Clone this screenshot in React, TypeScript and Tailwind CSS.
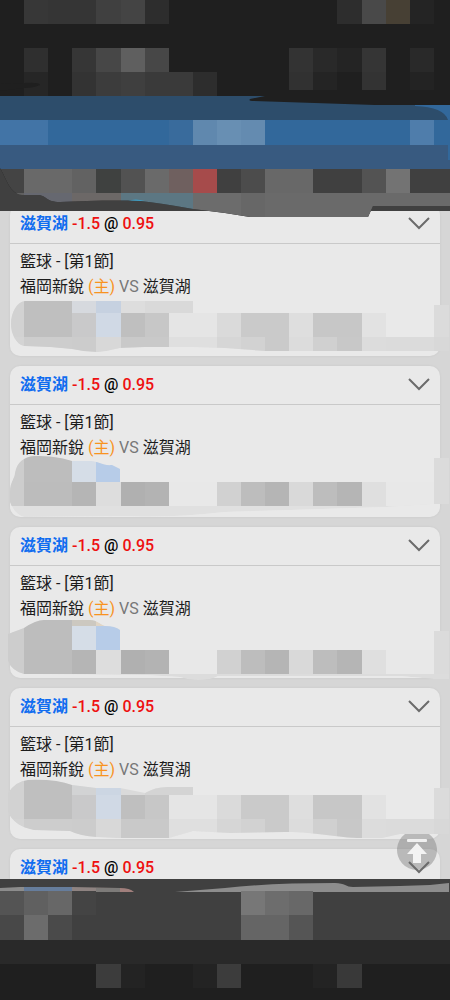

import { useId } from 'react'

// [first column, number of columns, colour]
type Cell = [number, number, string]

interface Row {
  y: number
  h: number
  cells: Cell[]
}

interface MosaicProps {
  top: number
  height: number
  rows: Row[]
  clip: string
  base: string
}

interface Bet {
  id: number
  pick: string
  handicap: string
  odds: string
  league: string
  home: string
  away: string
  mosaic?: MosaicProps
}

const COLUMN = 24.1

const faded: Cell[] = [
  [0, 1, '#d2d2d2'],
  [1, 2, '#bfbfbf'],
  [3, 1, '#c9c9ca'],
  [4, 1, '#d0d9e5'],
  [5, 1, '#bfbfbf'],
  [6, 1, '#c7c7c7'],
  [7, 2, '#e5e5e5'],
  [9, 1, '#dadada'],
  [10, 2, '#cacaca'],
  [12, 1, '#dedede'],
  [13, 2, '#c7c7c7'],
  [15, 1, '#e2e2e2'],
  [16, 2, '#e9e9e9'],
  [18, 1, '#dbdbdb'],
]

const fadedEnd: Cell[] = [
  [0, 1, '#d4d4d4'],
  [1, 2, '#cdcdcd'],
  [3, 1, '#cccccc'],
  [4, 1, '#d8d8d8'],
  [5, 2, '#c9c9c9'],
  [7, 2, '#dfdfdf'],
  [9, 1, '#d6d6d6'],
  [10, 1, '#d2d2d2'],
  [11, 1, '#cacaca'],
  [12, 1, '#dcdcdc'],
  [13, 1, '#d0d0d0'],
  [14, 1, '#c8c8c8'],
  [15, 1, '#dcdcdc'],
  [16, 2, '#dbdbdb'],
  [18, 1, '#d8d8d8'],
]

const strong: Cell[] = [
  [0, 1, '#cdcdcd'],
  [1, 2, '#bcbcbc'],
  [3, 1, '#b5b5b5'],
  [4, 1, '#dddddd'],
  [5, 1, '#b0b0b0'],
  [6, 1, '#b3b3b3'],
  [9, 1, '#d1d1d1'],
  [10, 1, '#bdbdbd'],
  [11, 1, '#b5b5b5'],
  [12, 1, '#d9d9d9'],
  [13, 1, '#bdbdbd'],
  [14, 1, '#b5b5b5'],
  [15, 1, '#dfdfdf'],
  [18, 1, '#dbdbdb'],
]

const strongTop: Cell[] = [
  [0, 1, '#cdcdcd'],
  [1, 2, '#bdbdbd'],
  [3, 1, '#d5dde7'],
  [4, 1, '#b7cce8'],
  [18, 1, '#dbdbdb'],
]

const cardMosaics: MosaicProps[] = [
  {
    top: 205,
    height: 151,
    base: '#dcdcdc',
    clip: 'M24 346C16 344 11 334 11 324C11 312 17 302 25 301H193V313H434V305H449V351H265L225 348L193 347L145 347L120 348Q108 351 97 352Q85 352 72 349L50 347Z',
    rows: [
      {
        y: 301,
        h: 12,
        cells: [
          [0, 1, '#d2d2d2'],
          [1, 2, '#bfbfbf'],
          [3, 1, '#d6d9de'],
          [4, 1, '#c6d1e0'],
          [5, 1, '#dddddd'],
          [6, 2, '#d9d9d9'],
          [18, 1, '#dbdbdb'],
        ],
      },
      { y: 313, h: 24, cells: faded },
      { y: 337, h: 16, cells: fadedEnd },
    ],
  },
  {
    top: 366,
    height: 151,
    base: '#e0e0e0',
    clip: 'M10 492C10 482 15 478 15 473C17 462 24 457 34 456C48 456 60 457 72 461H90C98 461 103 466 112 465L120 469V482H434V458H449V504H434L386 507L290 510L225 512Q170 518 130 516L24 517Q14 514 10 502Z',
    rows: [
      { y: 456, h: 26, cells: strongTop },
      { y: 482, h: 24, cells: strong },
    ],
  },
  {
    top: 527,
    height: 151,
    base: '#dcdcdc',
    clip: 'M8 634L24 628Q36 620 44 620H90C97 620 101 625 105 626Q115 626 120 630V650H434V631H449V679H434L400 676H218Q212 680 198 680Q188 680 180 677L145 675L24 674Q12 671 8 661Z',
    rows: [
      {
        y: 620,
        h: 6,
        cells: [
          [0, 1, '#cdcdcd'],
          [1, 2, '#bdbdbd'],
          [3, 1, '#ccc8c0'],
          [4, 1, '#e0d5c5'],
        ],
      },
      { y: 626, h: 24, cells: strongTop },
      { y: 650, h: 24, cells: strong },
    ],
  },
  {
    top: 688,
    height: 151,
    base: '#dcdcdc',
    clip: 'M8 793Q16 781 28 780Q56 779 72 785L96 788H120L145 793Q155 787 167 787H193V795H434V788H449V834H400L382 838H362C335 838 320 832 285 832L230 833L193 831L169 838H120L97 837Q80 836 70 831L34 830Q14 826 8 812Z',
    rows: [
      {
        y: 779,
        h: 16,
        cells: [
          [0, 1, '#d2d2d2'],
          [1, 2, '#bfbfbf'],
          [3, 1, '#d2d3d4'],
          [4, 1, '#ccd6e3'],
          [5, 1, '#dadada'],
          [6, 2, '#d4d4d4'],
          [18, 1, '#dbdbdb'],
        ],
      },
      { y: 795, h: 24, cells: faded },
      { y: 819, h: 20, cells: fadedEnd },
    ],
  },
]

const headerRows: Row[] = [
  {
    y: 0,
    h: 24,
    cells: [
      [1, 1, '#373737'],
      [2, 2, '#353535'],
      [4, 1, '#404040'],
      [5, 1, '#444444'],
      [6, 1, '#2d2d2d'],
      [14, 1, '#2d2d2d'],
      [15, 1, '#494949'],
      [16, 1, '#474034'],
      [17, 1, '#242424'],
    ],
  },
  {
    y: 48,
    h: 24,
    cells: [
      [1, 1, '#2f2f2f'],
      [3, 1, '#363636'],
      [4, 1, '#474747'],
      [5, 1, '#5f5f5f'],
      [6, 1, '#474747'],
      [12, 1, '#333333'],
      [13, 1, '#292929'],
      [14, 1, '#242424'],
      [15, 1, '#353535'],
      [17, 1, '#292929'],
    ],
  },
  {
    y: 72,
    h: 24,
    cells: [
      [1, 1, '#262626'],
      [3, 1, '#333333'],
      [4, 1, '#3c3c3c'],
      [5, 1, '#3f3f3f'],
      [6, 2, '#3a3a3a'],
      [8, 1, '#2d2d2d'],
    ],
  },
  {
    y: 72,
    h: 18,
    cells: [
      [12, 1, '#313131'],
      [13, 1, '#242424'],
      [15, 1, '#333333'],
      [17, 1, '#232323'],
    ],
  },
  { y: 96, h: 24, cells: [[0, 19, '#2d4d6b']] },
  {
    y: 120,
    h: 25,
    cells: [
      [0, 2, '#4274a6'],
      [2, 5, '#32689b'],
      [7, 1, '#396b9c'],
      [8, 1, '#6088ae'],
      [9, 1, '#688fb3'],
      [10, 1, '#648bb0'],
      [11, 6, '#32689b'],
      [17, 1, '#4f7dab'],
      [18, 1, '#32689b'],
    ],
  },
  { y: 145, h: 24, cells: [[0, 19, '#385a80']] },
  {
    y: 169,
    h: 24,
    cells: [
      [0, 1, '#444444'],
      [1, 2, '#696969'],
      [3, 1, '#626262'],
      [4, 1, '#3f4140'],
      [5, 1, '#525252'],
      [6, 1, '#6a6a6a'],
      [7, 1, '#6f605f'],
      [8, 1, '#a64b4b'],
      [9, 1, '#404040'],
      [10, 1, '#4c4c4c'],
      [11, 2, '#686868'],
      [13, 2, '#404040'],
      [15, 1, '#535353'],
      [16, 1, '#737373'],
      [17, 2, '#404040'],
    ],
  },
  {
    y: 193,
    h: 24,
    cells: [
      [0, 1, '#606060'],
      [1, 2, '#666870'],
      [3, 2, '#6c6867'],
      [5, 3, '#5c7783'],
      [8, 2, '#6c6c6c'],
      [10, 1, '#676767'],
      [11, 8, '#6a6a6a'],
    ],
  },
]

const footerRows: Row[] = [
  {
    y: 891,
    h: 24,
    cells: [
      [0, 1, '#545454'],
      [1, 1, '#606060'],
      [2, 1, '#676767'],
      [3, 1, '#444444'],
      [10, 1, '#777777'],
      [11, 1, '#6d6d6d'],
      [12, 1, '#686868'],
    ],
  },
  {
    y: 915,
    h: 25,
    cells: [
      [0, 1, '#484848'],
      [1, 1, '#6c6c6c'],
      [2, 1, '#4a4a4a'],
      [10, 2, '#656565'],
      [12, 1, '#555555'],
    ],
  },
  { y: 940, h: 24, cells: [[0, 19, '#292929']] },
  { y: 964, h: 36, cells: [[0, 19, '#1f1f1f']] },
  {
    y: 964,
    h: 24,
    cells: [
      [4, 1, '#3c3c3c'],
      [5, 1, '#232323'],
      [8, 1, '#232323'],
      [9, 1, '#3c3c3c'],
      [13, 1, '#232323'],
      [14, 1, '#393939'],
    ],
  },
]

const bets: Bet[] = [0, 1, 2, 3, 4].map((id) => ({
  id,
  pick: '滋賀湖',
  handicap: '-1.5',
  odds: '0.95',
  league: '籃球 - [第1節]',
  home: '福岡新銳',
  away: '滋賀湖',
  mosaic: cardMosaics[id],
}))

function Cells({ rows }: { rows: Row[] }) {
  return (
    <g shapeRendering="crispEdges">
      {rows.map((row, i) =>
        row.cells.map(([col, span, color]) => (
          <rect
            key={`${i}-${col}`}
            x={col * COLUMN}
            y={row.y}
            width={span * COLUMN}
            height={row.h}
            fill={color}
          />
        ))
      )}
    </g>
  )
}

function CardMosaic({ top, height, rows, clip, base }: MosaicProps) {
  const clipId = useId()
  return (
    <svg
      className="absolute -left-2.5 top-0 h-full w-[calc(100%+20px)] overflow-visible pointer-events-none"
      viewBox={`0 ${top} 450 ${height}`}
      preserveAspectRatio="none"
      aria-hidden="true"
    >
      <clipPath id={clipId}>
        <path d={clip} />
      </clipPath>
      <g clipPath={`url(#${clipId})`}>
        <path d={clip} fill={base} />
        {/* plain card colour behind the columns that hold no text */}
        <rect x="120" y={rows[0].y} width="314" height={rows[rows.length - 1].y + 24 - rows[0].y} fill="#e8e8e8" />
        <Cells rows={rows} />
      </g>
    </svg>
  )
}

function BetCard({ bet, open }: { bet: Bet; open: boolean }) {
  return (
    <article className="relative shrink-0">
      <div className="rounded-[10px] bg-[#e9e9e9] shadow-[0_0_3px_rgba(0,0,0,0.06)]">
        <div className="flex h-[39px] items-center justify-between border-b border-[#c9c9c9] px-2.5">
          <h2 className="text-base font-medium text-black">
            <span className="font-bold text-[#116df0]">{bet.pick}</span>{' '}
            <span className="text-[#ee1010]">{bet.handicap}</span> @{' '}
            <span className="text-[#ee1010]">{bet.odds}</span>
          </h2>
          <button type="button" aria-label="展開" className="relative z-20">
            <svg width="22" height="14" viewBox="0 0 22 14" fill="none" stroke="#6b6b6b" strokeWidth="2">
              <path d="M1 1L11 11L21 1" />
            </svg>
          </button>
        </div>
        {open && (
          <div className="h-28 px-2.5 pt-[5px] text-base leading-[25px] text-[#1c1c1c]">
            <p>{bet.league}</p>
            <p>
              {bet.home} <span className="text-[#f8931f]">(主)</span>{' '}
              <span className="text-[#777777]">VS</span> {bet.away}
            </p>
          </div>
        )}
      </div>
      {bet.mosaic && <CardMosaic {...bet.mosaic} />}
    </article>
  )
}

function TopBar() {
  return (
    <header className="relative z-30 h-[211px] shrink-0">
      <svg
        className="block h-full w-full overflow-visible"
        viewBox="0 0 450 211"
        preserveAspectRatio="none"
        aria-hidden="true"
      >
        <clipPath id="top-edge">
          <path d="M0 0H450V206H373L368 217H250L225 213L193 209Q160 203 140 201C120 200 80 201 60 202C46 202 46 195 38 195H22C10 194 6 178 0 168Z" />
        </clipPath>
        <rect width="450" height="211" fill="#404040" />
        <g clipPath="url(#top-edge)">
          <rect width="450" height="217" fill="#1f1f1f" />
          <Cells rows={headerRows} />
          <path d="M415 105H450V160H448V120Q444 107 415 106Z" fill="#32689b" />
          <path d="M265 96L250 99Q248 101 254 101L375 105H450V94H265Z" fill="#1f1f1f" />
          <path d="M0 84L24 83Q40 82 40 85Q34 88 24 88L0 91Z" fill="#1f1f1f" />
          <path d="M128 201Q135 198 145 201Z" fill="#3f9cc0" />
        </g>
      </svg>
    </header>
  )
}

function BottomBar() {
  return (
    <footer className="relative z-30 h-[121px] shrink-0">
      <svg
        className="block h-full w-full"
        viewBox="0 879 450 121"
        preserveAspectRatio="none"
        aria-hidden="true"
      >
        <rect y="879" width="450" height="121" fill="#404040" />
        <path d="M0 888L20 887H24V892H0Z" fill="#8c8c8c" />
        <path d="M24 887H72V892H24Z" fill="#667d9c" />
        <path d="M72 887L120 888V892H72Z" fill="#8e8381" />
        <path d="M96 888H120V892H96Z" fill="#7d7b79" />
        <path d="M120 888Q130 888 134 892H120Z" fill="#a17f7c" />
        <path d="M175 892L225 888Q270 883 335 883C345 883 346 887 353 887L400 886L430 885L449 883V892Z" fill="#8d8d8d" />
        <Cells rows={footerRows} />
      </svg>
    </footer>
  )
}

function BackToTop() {
  return (
    <button type="button" aria-label="回到頂端" className="absolute bottom-2 right-3 z-10">
      <svg className="block" width="42" height="40" viewBox="0 0 42 40">
        <path d="M9 3H33A20 20 0 1 1 9 3Z" fill="#777777" fillOpacity="0.42" />
        <rect x="11" y="8" width="20" height="3" rx="1" fill="#f0f0f0" />
        <path d="M21 12L31 23H25V32H17V23H11Z" fill="#f3f3f3" />
      </svg>
    </button>
  )
}

export default function App() {
  return (
    <div className="flex h-screen flex-col bg-[#d6d6d6] font-[Roboto,'Noto_Sans_CJK_TC',sans-serif]">
      <TopBar />
      <main className="relative min-h-0 flex-1 overflow-hidden">
        <div className="-mt-1.5 flex flex-col gap-2.5 px-2.5">
          {bets.map((bet, i) => (
            <BetCard key={bet.id} bet={bet} open={i < bets.length - 1} />
          ))}
        </div>
        <BackToTop />
      </main>
      <BottomBar />
    </div>
  )
}
